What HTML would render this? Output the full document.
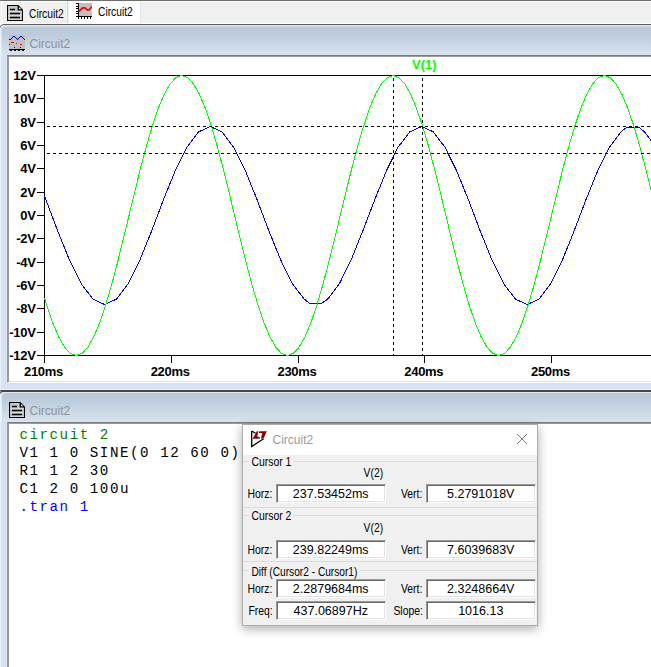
<!DOCTYPE html>
<html><head><meta charset="utf-8"><title>LTspice</title>
<style>
html,body{margin:0;padding:0}
body{width:651px;height:667px;overflow:hidden;background:#fff;position:relative;font-family:"Liberation Sans",sans-serif;}
div,svg{position:absolute;box-sizing:border-box}
.tabbar{left:0;top:0;width:651px;height:24px;background:#f0f0f0;border-top:1px solid #6f6f6f;border-bottom:1px solid #fff;box-shadow:inset 0 1px 0 #fff}
.tab{top:1px;height:22px}
.tt{font-size:12.3px;line-height:16px;color:#000;white-space:nowrap;transform:scaleX(.835);transform-origin:0 0}
.t1{left:1px;width:67px;border-left:1px solid #fff;border-right:1px solid #d8d8d8}
.t2{left:69px;width:72px;background:#fff;border-right:1px solid #e3e3e3}
.win{left:-1px;width:670px;border:1px solid #5f5f5f;border-radius:5px 5px 0 0;background:#d7e3f2;box-shadow:inset 1px 0 0 rgba(255,255,255,.5)}
.w1{top:24px;height:367px}
.w2{top:390px;height:300px;border-top:2px solid #464646}
.w2 .ttl{top:0;box-shadow:inset 1px 1px 0 rgba(255,255,255,.55)}
.hl{left:0;top:389px;width:651px;height:1px;background:rgba(255,255,255,.6)}
.ttl{left:1px;top:1px;width:668px;height:30px;background:linear-gradient(#b8c8da,#bfcede 35%,#d9e4f1);border-radius:4px 4px 0 0;box-shadow:inset 1px 1px 0 rgba(255,255,255,.35)}
.ttxt{left:29.5px;font-size:12px;color:#8d939b;line-height:16px}
.client{background:#fff;border-top:1px solid #7d7d7d;border-left:1px solid #9a9a9a;box-shadow:inset 1px 1px 0 #9c9c9c}
.yl{left:0;width:35.6px;text-align:right;font-weight:bold;font-size:13px;line-height:16px;color:#000;letter-spacing:-0.3px}
.xl{top:364px;width:60px;text-align:center;font-weight:bold;font-size:13px;line-height:16px;color:#000;letter-spacing:-0.3px}
.vl{left:412px;top:57.4px;font-weight:bold;font-size:13px;line-height:16px;color:#00ff00}
.net{left:19.4px;top:425.8px;font-family:"Liberation Mono",monospace;font-size:14.2px;letter-spacing:1.54px;line-height:18.1px;white-space:pre;color:#000}
.dlg{left:242px;top:424px;width:295.5px;height:202.2px;background:#f0f0f0;border:1px solid #acacac;box-shadow:0 3px 10px rgba(0,0,0,.33)}
.dt{left:243px;top:425px;width:293.5px;height:30px;background:#fff}
.dname{left:272.5px;top:432px;font-size:12px;color:#9a9a9a;line-height:16px}
.gln{left:243px;width:293.5px;height:1px;background:#dcdcdc}
.lb{font-size:12.3px;line-height:14px;white-space:nowrap;transform:scaleX(.845);transform-origin:0 0;color:#000}
.lb.r{transform-origin:100% 0}
.lb.g{background:#f0f0f0;padding:0 3px}
.ed{background:#fff;border:1px solid #fff;border-top-color:#9a9a9a;border-left-color:#9a9a9a;box-shadow:inset 1px 1px 0 #696969,inset -1px -1px 0 #e3e3e3;font-size:12.5px;line-height:18.5px;text-align:center;height:19.5px;width:109.5px;color:#000;white-space:nowrap}
</style></head><body>
<div class="tabbar"></div>
<div class="tab t1"></div><div class="tab t2"></div>
<svg style="left:7px;top:5px" width="16" height="16" viewBox="0 0 16 16">
<path d="M0 0H11.3L16 4.7V16H0Z" fill="#000"/><path d="M1.1 1.1H10.6V5.4H14.9V14.9H1.1Z" fill="#c6c6c6"/>
<path d="M1.1 6H14.9V7.2H1.1ZM1.1 10H14.9V11.2H1.1ZM1.1 14H14.9V14.9H1.1Z" fill="#d6d6d6"/>
<path d="M12 2L14.2 4.2H12Z" fill="#fff"/>
<path d="M3 3.7H8V5.2H3ZM3 7.8H13V9.3H3ZM3 11.8H13V13.3H3Z" fill="#000"/></svg>
<div class="tt" style="left:29px;top:6px">Circuit2</div>
<svg style="left:76px;top:3px" width="16" height="16" viewBox="0 0 16 16" shape-rendering="crispEdges"><rect x="3" y="0" width="13" height="13" fill="#c0c0c0"/><path d="M2 0H3V14H2ZM0 13H16V14H0ZM0 0H2V1H0ZM0 3H2V4H0ZM0 5H2V6H0ZM0 8H2V9H0ZM0 10H2V11H0ZM2 14H3V16H2ZM5 14H6V16H5ZM8 14H9V16H8ZM11 14H12V16H11ZM14 14H15V16H14Z" fill="#000"/><path d="M3 8.3L6.5 4.8H9L11 6.8H13L16 3.5" stroke="#ff0000" stroke-width="1.8" fill="none" shape-rendering="auto"/></svg>
<div class="tt" style="left:98px;top:4px">Circuit2</div>

<div class="win w1"><div class="ttl"></div></div>
<svg style="left:9px;top:35px" width="16" height="16" viewBox="0 0 16 16" shape-rendering="crispEdges"><rect x="0" y="0" width="16" height="14" fill="#c0c0c0"/><path d="M1 4h1v1h-1zM2 3h1v1h-1zM3 2h1v1h-1zM4 1h1v1h-1zM5 1h1v1h-1zM6 2h1v1h-1zM7 3h1v1h-1zM8 4h1v1h-1zM9 3h1v1h-1zM10 2h1v1h-1zM11 1h1v1h-1zM12 1h1v1h-1zM13 2h1v1h-1zM14 3h1v1h-1zM15 4h1v1h-1z" fill="#0000ff"/><path d="M2 7H5V8H2ZM7 8H8V9H7ZM11 9H13V10H11Z" fill="#ff0000"/><path d="M5 12H6V13H5ZM11 12H12V13H11Z" fill="#000090"/><path d="M0 4H1V5H0ZM0 9H1V10H0Z" fill="#000"/><path d="M0 14H16V15H0ZM1 15H3V16H1ZM5 15H7V16H5ZM9 15H11V16H9ZM13 15H15V16H13Z" fill="#000"/></svg>
<div class="ttxt" style="top:36px">Circuit2</div>
<div class="client" style="left:7px;top:55px;width:650px;height:328px;border-bottom:1px solid #fff;box-shadow:inset 1px 1px 0 #9c9c9c,inset 0 -1px 0 #e4e4e4"></div>
<svg style="left:8px;top:56px" width="643" height="326" viewBox="8 56 643 326" shape-rendering="crispEdges">
<g fill="none" stroke="#000" stroke-width="1">
<path d="M37 75.5H651M44.5 75V363M37 355.5H651"/>
<path d="M37 98.8H44M37 122.2H44M37 145.5H44M37 168.8H44M37 192.2H44M37 215.5H44M37 238.8H44M37 262.2H44M37 285.5H44M37 308.8H44M37 332.2H44"/>
<path d="M171.5 356V363M298.5 356V363M424.5 356V363M551.5 356V363"/>
</g>
<polyline points="44.5,196.2 46.0,200.0 57.7,230.9 69.4,260.0 81.2,283.7 92.9,299.1 104.6,304.5 116.4,299.2 128.1,283.7 139.9,260.0 151.6,231.0 163.3,200.1 175.1,171.0 186.8,147.3 198.5,131.9 210.3,126.5 222.0,131.8 233.7,147.3 245.5,171.0 257.2,200.0 268.9,230.9 280.7,260.0 292.4,283.7 304.2,299.1 309.3,303.0 322.0,303.0 327.6,299.2 339.4,283.7 351.1,260.0 362.8,231.0 374.6,200.1 386.3,171.0 398.0,147.3 409.8,131.9 421.5,126.5 433.3,131.8 445.0,147.3 456.7,171.0 468.5,200.0 480.2,230.9 491.9,260.0 503.7,283.7 515.4,299.1 527.1,304.5 538.9,299.2 550.6,283.7 562.4,260.0 574.1,231.0 585.8,200.1 597.6,171.0 609.3,147.3 621.0,131.9 626.9,127.1 638.7,127.1 644.5,131.8 656.2,147.3" fill="none" stroke="#0000ff" stroke-width="1"/>
<polyline points="44.5,297.8 46.8,305.5 52.7,322.7 58.6,336.7 64.5,347.1 70.3,353.4 76.2,355.5 82.1,353.4 87.9,347.1 93.8,336.7 99.7,322.7 105.5,305.5 111.4,285.5 117.3,263.4 123.1,239.8 129.0,215.5 134.9,191.2 140.7,167.6 146.6,145.5 152.5,125.5 158.3,108.3 164.2,94.3 170.1,83.9 175.9,77.6 181.8,75.5 187.7,77.6 193.5,83.9 199.4,94.3 205.3,108.3 211.2,125.5 217.0,145.5 222.9,167.6 228.8,191.2 234.6,215.5 240.5,239.8 246.4,263.4 252.2,285.5 258.1,305.5 264.0,322.7 269.8,336.7 275.7,347.1 281.6,353.4 287.4,355.5 293.3,353.4 299.2,347.1 305.0,336.7 310.9,322.7 316.8,305.5 322.6,285.5 328.5,263.4 334.4,239.8 340.2,215.5 346.1,191.2 352.0,167.6 357.9,145.5 363.7,125.5 369.6,108.3 375.5,94.3 381.3,83.9 387.2,77.6 393.1,75.5 398.9,77.6 404.8,83.9 410.7,94.3 416.5,108.3 422.4,125.5 428.3,145.5 434.1,167.6 440.0,191.2 445.9,215.5 451.7,239.8 457.6,263.4 463.5,285.5 469.3,305.5 475.2,322.7 481.1,336.7 487.0,347.1 492.8,353.4 498.7,355.5 504.6,353.4 510.4,347.1 516.3,336.7 522.2,322.7 528.0,305.5 533.9,285.5 539.8,263.4 545.6,239.8 551.5,215.5 557.4,191.2 563.2,167.6 569.1,145.5 575.0,125.5 580.8,108.3 586.7,94.3 592.6,83.9 598.4,77.6 604.3,75.5 610.2,77.6 616.0,83.9 621.9,94.3 627.8,108.3 633.7,125.5 639.5,145.5 645.4,167.6 651.3,191.2 657.1,215.5" fill="none" stroke="#00ff00" stroke-width="1"/>
<g fill="none" stroke="#000" stroke-width="1" stroke-dasharray="3 3">
<path d="M47 126.5H651M47 153.5H651"/>
<path d="M393.5 78V355M422.5 78V355"/>
</g>
</svg>
<div class="yl" style="top:68.0px">12V</div><div class="yl" style="top:91.3px">10V</div><div class="yl" style="top:114.7px">8V</div><div class="yl" style="top:138.0px">6V</div><div class="yl" style="top:161.3px">4V</div><div class="yl" style="top:184.7px">2V</div><div class="yl" style="top:208.0px">0V</div><div class="yl" style="top:231.3px">-2V</div><div class="yl" style="top:254.7px">-4V</div><div class="yl" style="top:278.0px">-6V</div><div class="yl" style="top:301.3px">-8V</div><div class="yl" style="top:324.7px">-10V</div><div class="yl" style="top:348.0px">-12V</div><div class="xl" style="left:13.5px">210ms</div><div class="xl" style="left:140.2px">220ms</div><div class="xl" style="left:267.0px">230ms</div><div class="xl" style="left:393.8px">240ms</div><div class="xl" style="left:520.5px">250ms</div>
<div class="vl">V(1)</div>

<div class="hl"></div><div class="win w2"><div class="ttl"></div></div>
<svg style="left:9px;top:402px" width="16" height="16" viewBox="0 0 16 16">
<path d="M0 0H11.3L16 4.7V16H0Z" fill="#000"/><path d="M1.1 1.1H10.6V5.4H14.9V14.9H1.1Z" fill="#c6c6c6"/>
<path d="M1.1 6H14.9V7.2H1.1ZM1.1 10H14.9V11.2H1.1ZM1.1 14H14.9V14.9H1.1Z" fill="#d6d6d6"/>
<path d="M12 2L14.2 4.2H12Z" fill="#fff"/>
<path d="M3 3.7H8V5.2H3ZM3 7.8H13V9.3H3ZM3 11.8H13V13.3H3Z" fill="#000"/></svg>
<div class="ttxt" style="top:403px">Circuit2</div>
<div class="client" style="left:7px;top:422px;width:650px;height:300px"></div>
<div class="net"><span style="color:#008000">circuit 2</span>
V1 1 0 SINE(0 12 60 0)
R1 1 2 30
C1 2 0 100u
<span style="color:#0000ff">.tran 1</span></div>

<div class="dlg"></div><div class="dt"></div>
<svg style="left:249px;top:429px" width="20" height="20" viewBox="249 429 20 20"><path d="M251.7 431V446.5L263.6 438.8M251.7 431L255.6 433.3" fill="none" stroke="#000" stroke-width="1.3"/><path d="M256.8 431.2H258.2L257.3 436.4L259.9 437.5V438.8H252.6Z" fill="#8b0000"/><path d="M259.4 431.2H266.8L263.6 438.6H261L262.3 432.9H258.8Z" fill="#8b0000"/></svg>
<div class="dname">Circuit2</div>
<svg style="left:516px;top:433px" width="12" height="12" viewBox="0 0 12 12"><path d="M1 1L11 11M11 1L1 11" stroke="#7d7d7d" stroke-width="1" fill="none"/></svg>
<div class="gln" style="top:461px"></div><div class="gln" style="top:507px"></div>
<div class="gln" style="top:515px"></div><div class="gln" style="top:561.3px"></div>
<div class="gln" style="top:570px"></div>
<div class="lb g" style="left:248.5px;top:455px">Cursor 1</div>
<div class="lb g" style="left:248.5px;top:509px">Cursor 2</div>
<div class="lb g" style="left:249px;top:564.5px;transform:scaleX(.826)">Diff (Cursor2 - Cursor1)</div>
<div class="lb r" style="right:267.5px;top:466px">V(2)</div>
<div class="lb r" style="right:267.5px;top:520.5px">V(2)</div>
<div class="lb r" style="right:378.5px;top:487px">Horz:</div><div class="ed" style="left:276px;top:484.2px;height:19.3px;line-height:19.5px">237.53452ms</div>
<div class="lb r" style="right:228.5px;top:487px">Vert:</div><div class="ed" style="left:426px;top:484.2px;height:19.3px;line-height:19.5px">5.2791018V</div>
<div class="lb r" style="right:378.5px;top:543px">Horz:</div><div class="ed" style="left:276px;top:540.2px;height:19.3px;line-height:19.5px">239.82249ms</div>
<div class="lb r" style="right:228.5px;top:543px">Vert:</div><div class="ed" style="left:426px;top:540.2px;height:19.3px;line-height:19.5px">7.6039683V</div>
<div class="lb r" style="right:378.5px;top:582px">Horz:</div><div class="ed" style="left:276px;top:579px;height:19.3px;line-height:19.5px">2.2879684ms</div>
<div class="lb r" style="right:228.5px;top:582px">Vert:</div><div class="ed" style="left:426px;top:579px;height:19.3px;line-height:19.5px">2.3248664V</div>
<div class="lb r" style="right:378.5px;top:604px">Freq:</div><div class="ed" style="left:276px;top:601px;height:19.3px;line-height:19.5px">437.06897Hz</div>
<div class="lb r" style="right:228.5px;top:604px">Slope:</div><div class="ed" style="left:426px;top:601px;height:19.3px;line-height:19.5px">1016.13</div>
</body></html>
